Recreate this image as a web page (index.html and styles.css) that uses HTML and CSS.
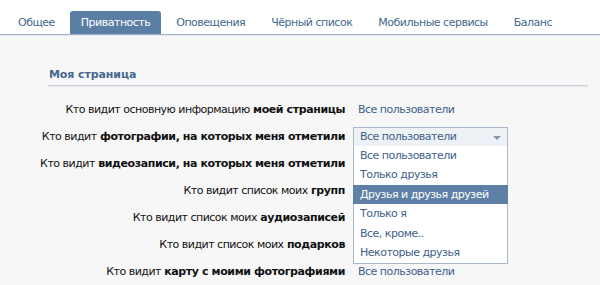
FILE: index.html
```html
<!DOCTYPE html>
<html lang="ru">

<head>
    <meta charset="UTF-8">
    <title>Настройки</title>
    <link rel="stylesheet" href="styles.css">
</head>

<body>
    <div class="tabs">
        <a class="tab" href="#">Общее</a>
        <a class="tab active" href="#">Приватность</a>
        <a class="tab" href="#">Оповещения</a>
        <a class="tab" href="#">Чёрный список</a>
        <a class="tab" href="#">Мобильные сервисы</a>
        <a class="tab" href="#">Баланс</a>
    </div>

    <div class="content">
        <h2 class="section-title">Моя страница</h2>

        <div class="rows">
            <div class="label">Кто видит основную информацию <b>моей страницы</b></div>
            <div class="value">Все пользователи</div>

            <div class="label">Кто видит <b>фотографии, на которых меня отметили</b></div>
            <div class="value">
                <div class="dropdown">
                    <div class="dropdown-field">
                        Все пользователи
                        <span class="arrow"></span>
                    </div>
                    <ul class="dropdown-list">
                        <li>Все пользователи</li>
                        <li>Только друзья</li>
                        <li class="hover">Друзья и друзья друзей</li>
                        <li>Только я</li>
                        <li>Все, кроме..</li>
                        <li>Некоторые друзья</li>
                    </ul>
                </div>
            </div>

            <div class="label">Кто видит <b>видеозаписи, на которых меня отметили</b></div>
            <div class="value">Все пользователи</div>

            <div class="label">Кто видит список моих <b>групп</b></div>
            <div class="value">Все пользователи</div>

            <div class="label">Кто видит список моих <b>аудиозаписей</b></div>
            <div class="value">Все пользователи</div>

            <div class="label">Кто видит список моих <b>подарков</b></div>
            <div class="value">Все пользователи</div>

            <div class="label">Кто видит <b>карту с моими фотографиями</b></div>
            <div class="value">Все пользователи</div>
        </div>
    </div>
</body>

</html>
```

FILE: styles.css
```css
* {
    margin: 0;
    padding: 0;
    box-sizing: border-box;
}

body {
    background: #f7f7f7;
    font-family: "DejaVu Sans", Verdana, sans-serif;
    font-size: 11px;
    letter-spacing: -0.5px;
    color: #000;
    overflow: hidden;
}

/* tabs on top */
.tabs {
    display: flex;
    gap: 4px;
    height: 35px;
    padding: 11px 0 0 7px;
    background: #fff;
    border-bottom: 1px solid #a6b7c9;
    box-shadow: 0 1px 0 #dfe5ec;
}

.tab {
    display: block;
    height: 23px;
    line-height: 24px;
    padding: 0 11px;
    color: #45688e;
    text-decoration: none;
    border-radius: 3px 3px 0 0;
}

.tab.active {
    background: #5b7ea5;
    color: #fff;
}

.section-title {
    margin: 32px 12px 0 48px;
    padding: 0 0 2px 1px;
    font-size: 11px;
    line-height: 16px;
    letter-spacing: -0.1px;
    color: #45688e;
    border-bottom: 1px solid #c7d1dc;
    box-shadow: 0 1px 0 #e6eaef;
}

/* label / value table */
.rows {
    display: grid;
    grid-template-columns: 345px 1fr;
    grid-auto-rows: 27px;
    column-gap: 13px;
    margin-top: 10px;
}

.label {
    display: flex;
    align-items: center;
    justify-content: flex-end;
    white-space: nowrap;
    color: #111;
}

.label b {
    margin-left: 0.3em;
    letter-spacing: -0.4px;
}

.value {
    display: flex;
    align-items: center;
    color: #3e6189;
}

.dropdown {
    position: relative;
    margin-left: -5px;
    width: 155px;
}

.dropdown-field {
    position: relative;
    height: 20px;
    line-height: 18px;
    padding-left: 6px;
    background: #eef1f5;
    border: 1px solid #a9b9ca;
    border-bottom: none;
    color: #3e6189;
}

.arrow {
    position: absolute;
    right: 6px;
    top: 8px;
    border-left: 4px solid transparent;
    border-right: 4px solid transparent;
    border-top: 4px solid #8597ad;
}

/* the open list lies over the rows below */
.dropdown-list {
    position: absolute;
    left: 0;
    top: 19px;
    width: 155px;
    list-style: none;
    background: #fff;
    border: 1px solid #a9b9ca;
    border-top: none;
    z-index: 10;
}

.dropdown-list li {
    height: 19.5px;
    line-height: 19.5px;
    padding-left: 6px;
    color: #3e6189;
    white-space: nowrap;
}

.dropdown-list li.hover {
    background: #5f80a6;
    color: #fff;
    margin: 0 -1px;
    padding-left: 7px;
}
```
